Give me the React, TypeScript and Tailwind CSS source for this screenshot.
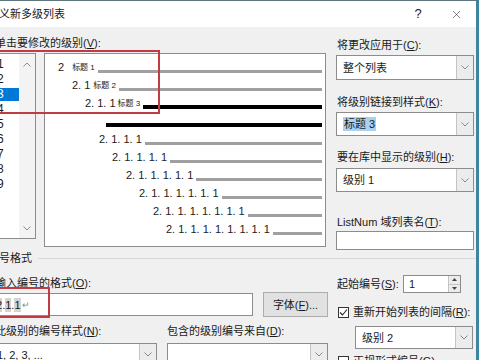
import { X } from "lucide-react";

const font = "font-['Liberation_Sans','Noto_Sans_CJK_SC',sans-serif]";

function Chevron({ up = false }: { up?: boolean }) {
  return (
    <svg width="8" height="5" viewBox="0 0 8 5" className={up ? "rotate-180" : ""}>
      <polyline points="0.5,0.5 4,4 7.5,0.5" fill="none" stroke="#8a8a8a" strokeWidth="1" />
    </svg>
  );
}

function Select({ value, className, highlight = false }: { value: string; className: string; highlight?: boolean }) {
  return (
    <div className={`flex bg-white border border-[#8c8c8c] ${className}`}>
      <div className="flex-1 flex items-center pl-[6px]">
        {highlight ? <span className="bg-[#a8d1f2] px-[1px]">{value}</span> : <span>{value}</span>}
      </div>
      <div className="w-[17px] flex items-center justify-center bg-[#ececec] border-l border-[#c4c4c4]">
        <Chevron />
      </div>
    </div>
  );
}

function Checkbox({ checked }: { checked: boolean }) {
  return (
    <div className="w-[11px] h-[11px] border border-[#333] bg-white flex items-center justify-center">
      {checked && (
        <svg width="9" height="9" viewBox="0 0 9 9">
          <polyline points="1,4.5 3.5,7 8,1.5" fill="none" stroke="#222" strokeWidth="1.1" />
        </svg>
      )}
    </div>
  );
}

const rows = [
  { indent: 13, num: "2", tag: "1", gap: 8, bar: "gray" },
  { indent: 27, num: "2. 1", tag: "2", gap: 3, bar: "gray" },
  { indent: 40, num: "2. 1. 1", tag: "3", gap: 2, bar: "black" },
  { indent: 58, num: "", tag: "", gap: 0, bar: "black" },
  { indent: 54, num: "2. 1. 1. 1", tag: "", gap: 0, bar: "gray" },
  { indent: 67, num: "2. 1. 1. 1. 1", tag: "", gap: 0, bar: "gray" },
  { indent: 81, num: "2. 1. 1. 1. 1. 1", tag: "", gap: 0, bar: "gray" },
  { indent: 94, num: "2. 1. 1. 1. 1. 1. 1", tag: "", gap: 0, bar: "gray" },
  { indent: 108, num: "2. 1. 1. 1. 1. 1. 1. 1", tag: "", gap: 0, bar: "gray" },
  { indent: 121, num: "2. 1. 1. 1. 1. 1. 1. 1. 1", tag: "", gap: 0, bar: "gray" },
];

export default function App() {
  return (
    <div
      className={`relative w-[479px] h-[360px] overflow-hidden bg-[#f0f0f0] border-t border-[#5d7680] border-r-[3px] border-r-[#3b87a1] text-[11px] leading-[14px] text-[#1a1a1a] ${font}`}
    >
      {/* title bar */}
      <div className="h-[26px] bg-white flex items-center">
        <span className="-ml-[12px] text-[11px]">定义新多级列表</span>
        <div className="ml-auto flex items-center pr-[5px]">
          <span className="w-[30px] text-center text-[13px]">?</span>
          <div className="w-[30px] ml-[8px] flex justify-center">
            <X size={13} strokeWidth={1} color="#222" />
          </div>
        </div>
      </div>

      {/* top section */}
      <div className="flex h-[224px]">
        <div className="w-[330px] pt-[9px]">
          <div className="-ml-[5px]">
            单击要修改的级别(<u>V</u>):
          </div>
          <div className="flex mt-[3px]">
            {/* level list */}
            <div className="-ml-px w-[37px] h-[186px] bg-white border border-[#8c8c8c] flex">
              <div className="w-[19px] pt-[2px] text-[12px]">
                {["1", "2", "3", "4", "5", "6", "7", "8", "9"].map((n) => (
                  <div key={n} className="h-[15px] flex items-end">
                    <div
                      className={`h-[13px] w-full leading-[13px] ${n === "3" ? "bg-[#0078d7] text-white" : ""}`}
                    >
                      <span className="-ml-[3px]">{n}</span>
                    </div>
                  </div>
                ))}
              </div>
              <div className="w-[16px] bg-[#f3f3f3] flex flex-col justify-between items-center pt-[8px] pb-[7px]">
                <Chevron up />
                <Chevron />
              </div>
            </div>
            {/* preview */}
            <div className="ml-[8px] w-[282px] h-[194px] bg-white border border-[#8c8c8c] pt-[4px] pr-[3px] flex flex-col">
              {rows.map((r, i) => (
                <div key={i} className="h-[18px] flex items-center" style={{ paddingLeft: r.indent }}>
                  {r.num && <span className="text-[11px] text-[#222] whitespace-pre">{r.num}</span>}
                  {r.tag && (
                    <span className="text-[8px] leading-[10px] mt-[2px] whitespace-pre" style={{ marginLeft: r.gap }}>
                      标题 {r.tag}
                    </span>
                  )}
                  <div
                    className={`flex-1 ml-[3px] mt-[8px] ${r.bar === "black" ? "h-[4px] bg-black" : "h-[3px] bg-[#a0a0a0]"}`}
                  />
                </div>
              ))}
            </div>
          </div>
        </div>

        {/* right column */}
        <div className="ml-[6px] w-[138px] pt-[11px] flex flex-col">
          <div className="pl-[1px]">
            将更改应用于(<u>C</u>):
          </div>
          <Select value="整个列表" className="mt-[3px] h-[25px]" />
          <div className="pl-[1px] mt-[15px]">
            将级别链接到样式(<u>K</u>):
          </div>
          <Select value="标题 3" highlight className="mt-[3px] h-[24px]" />
          <div className="pl-[1px] mt-[14px]">
            要在库中显示的级别(<u>H</u>):
          </div>
          <Select value="级别 1" className="mt-[4px] h-[24px]" />
          <div className="pl-[1px] mt-[23px]">
            ListNum 域列表名(<u>T</u>):
          </div>
          <div className="mt-[2px] h-[19px] bg-white border border-[#8c8c8c]" />
        </div>
      </div>

      {/* group header */}
      <div className="h-[14px] flex items-center">
        <span className="-ml-[12px]">编号格式</span>
        <div className="flex-1 h-px bg-[#d9d9d9] ml-[6px]" />
      </div>

      {/* bottom section */}
      <div className="flex">
        <div className="w-[330px] pt-[11px]">
          <div className="-ml-[5px]">
            输入编号的格式(<u>O</u>):
          </div>
          <div className="flex mt-[3px]">
            <div className="-ml-[8px] w-[261px] h-[23px] bg-white border border-[#8c8c8c] flex items-center pl-[3px] text-[11px]">
              <span className="bg-[#d4d4d4]">2</span>
              <span>.</span>
              <span className="bg-[#d4d4d4]">1</span>
              <span>.</span>
              <span className="bg-[#d4d4d4]">1</span>
              <span className="text-[9px] text-[#8a8a8a] ml-[1px]">↵</span>
            </div>
            <button className="ml-[10px] w-[65px] h-[25px] -mt-px bg-[#e1e1e1] border border-[#adadad] text-[11px]">
              字体(<u>F</u>)...
            </button>
          </div>
          <div className="flex mt-[7px]">
            <div className="-ml-[5px] w-[172px]">
              此级别的编号样式(<u>N</u>):
            </div>
            <div>
              包含的级别编号来自(<u>D</u>):
            </div>
          </div>
          <div className="flex mt-[5px]">
            <Select value="1, 2, 3, ..." className="-ml-[9px] w-[166px] h-[23px] [&>div:first-child]:pl-[5px]" />
            <Select value="" className="ml-[10px] w-[161px] h-[23px]" />
          </div>
        </div>

        <div className="ml-[6px] w-[140px] pt-[10px] flex flex-col">
          <div className="flex items-center h-[18px]">
            <span className="pl-[1px] w-[67px]">
              起始编号(<u>S</u>):
            </span>
            <div className="w-[58px] h-[18px] bg-white border border-[#8c8c8c] flex">
              <div className="flex-1 pl-[5px] leading-[16px]">1</div>
              <div className="w-[12px] flex flex-col border-l border-[#c4c4c4] bg-[#ececec]">
                <div className="flex-1 flex items-center justify-center border-b border-[#c4c4c4]">
                  <svg width="5" height="3" viewBox="0 0 5 3">
                    <polygon points="0,3 2.5,0 5,3" fill="#444" />
                  </svg>
                </div>
                <div className="flex-1 flex items-center justify-center">
                  <svg width="5" height="3" viewBox="0 0 5 3">
                    <polygon points="0,0 2.5,3 5,0" fill="#444" />
                  </svg>
                </div>
              </div>
            </div>
          </div>
          <div className="flex items-center mt-[12px] ml-[2px]">
            <Checkbox checked />
            <span className="ml-[4px]">
              重新开始列表的间隔(<u>R</u>):
            </span>
          </div>
          <Select value="级别 2" className="mt-[7px] ml-[19px] w-[118px] h-[23px]" />
          <div className="flex items-center mt-[5px] ml-[2px]">
            <Checkbox checked={false} />
            <span className="ml-[4px]">
              正规形式编号(<u>G</u>)
            </span>
          </div>
        </div>
      </div>

      {/* red annotation boxes */}
      <div className="absolute left-[-10px] top-[49px] w-[170px] h-[64px] border-2 border-[#c43a43]" />
      <div className="absolute left-[-10px] top-[286px] w-[60px] h-[31px] border-2 border-[#c43a43]" />
    </div>
  );
}
